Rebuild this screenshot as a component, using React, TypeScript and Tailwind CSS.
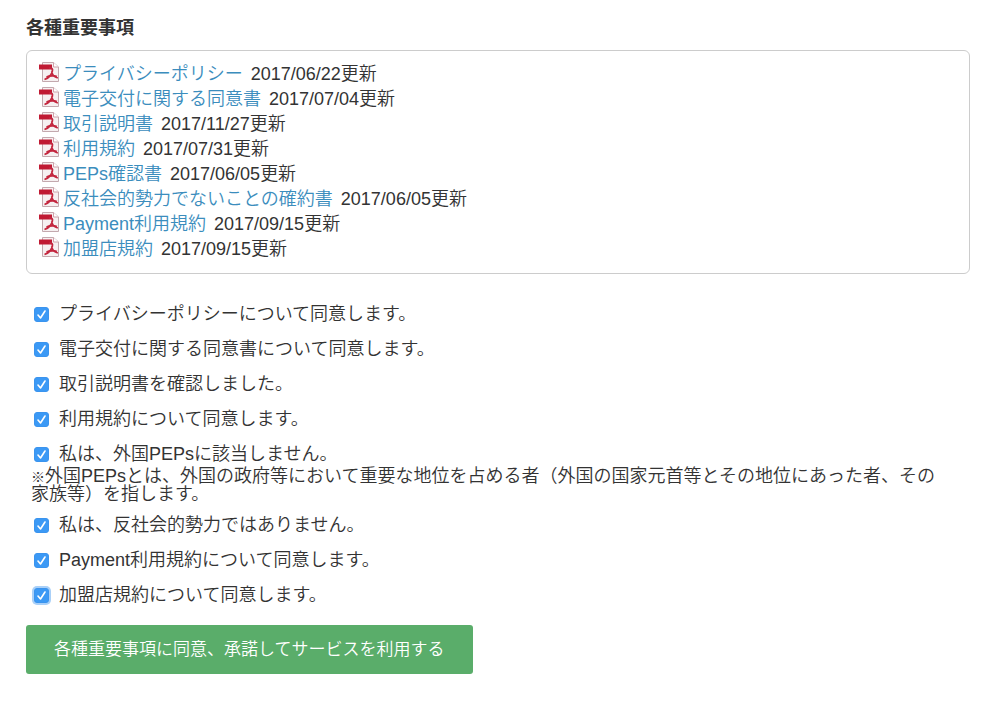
import { useId } from "react";

const documents = [
  { title: "プライバシーポリシー", updated: "2017/06/22" },
  { title: "電子交付に関する同意書", updated: "2017/07/04" },
  { title: "取引説明書", updated: "2017/11/27" },
  { title: "利用規約", updated: "2017/07/31" },
  { title: "PEPs確認書", updated: "2017/06/05" },
  { title: "反社会的勢力でないことの確約書", updated: "2017/06/05" },
  { title: "Payment利用規約", updated: "2017/09/15" },
  { title: "加盟店規約", updated: "2017/09/15" },
];

function PdfIcon() {
  return (
    <svg viewBox="0 0 20 20" className="size-5 shrink-0" aria-hidden="true">
      <path d="M3.500 .5h11l5 4.500v14.500h-16z" fill="#f6f0f1" stroke="#c3a9ae" />
      <path d="M14.500 .5v4.500h5" fill="#fff" stroke="#cfa3ab" />
      <path d="M0 2.500h13v5H0z" fill="#c01a33" />
      <path
        d="M10 6c3-.5 4 .8 3.300 3.200C12.500 12.500 9.500 16 5.500 17.500M12.800 9.500c0 3 2.200 5.300 6 6.500M7.500 15c3-1.300 6.500-1.800 10.500-.5"
        fill="none"
        stroke="#c3253d"
        strokeWidth="1.8"
      />
    </svg>
  );
}

function Agreement({ text, focused }: { text: string; focused?: boolean }) {
  const id = useId();
  return (
    <div className="flex h-[35px] items-center gap-[10px] pl-2">
      <span className="mt-[2px] grid shrink-0">
        <input
          id={id}
          type="checkbox"
          defaultChecked
          autoFocus={focused}
          className="peer col-start-1 row-start-1 size-[15px] appearance-none rounded-[3px] border border-[#b5b5b5] bg-white outline-none checked:border-[#3b94ee] checked:bg-[#3b99f5] focus:ring-2 focus:ring-[#a9d0f8]"
        />
        <svg
          viewBox="0 0 15 15"
          className="pointer-events-none invisible col-start-1 row-start-1 size-[15px] peer-checked:visible"
          aria-hidden="true"
        >
          <path
            d="M4 8l2.500 3L11 4"
            fill="none"
            stroke="#fff"
            strokeWidth="1.6"
            strokeLinecap="round"
            strokeLinejoin="round"
          />
        </svg>
      </span>
      <label htmlFor={id}>{text}</label>
    </div>
  );
}

export default function App() {
  return (
    <main className="bg-white pt-4 pr-[30px] pb-12 pl-[26px] font-['Liberation_Sans','Noto_Sans_CJK_JP',sans-serif] text-lg leading-6 font-[350] text-[#333]">
      <h1 className="font-bold">各種重要事項</h1>

      <ul className="mt-[10px] rounded-md border border-[#ccc] px-3 py-[11px]">
        {documents.map((doc) => (
          <li key={doc.title} className="flex h-[25px] items-start gap-1">
            <PdfIcon />
            <a href="#" className="text-[#3b8dbd]">
              {doc.title}
            </a>
            <span className="ml-1">{doc.updated}更新</span>
          </li>
        ))}
      </ul>

      <form onSubmit={(e) => e.preventDefault()}>
        <div className="mt-[22px]">
          <Agreement text="プライバシーポリシーについて同意します。" />
          <Agreement text="電子交付に関する同意書について同意します。" />
          <Agreement text="取引説明書を確認しました。" />
          <Agreement text="利用規約について同意します。" />
          <Agreement text="私は、外国PEPsに該当しません。" />
          <p className="-mt-1 px-[5px] leading-[18px]">
            <span className="text-sm leading-none">※</span>
            外国PEPsとは、外国の政府等において重要な地位を占める者（外国の国家元首等とその地位にあった者、その
            <br />
            家族等）を指します。
          </p>
          <div className="mt-1">
            <Agreement text="私は、反社会的勢力ではありません。" />
            <Agreement text="Payment利用規約について同意します。" />
            <Agreement text="加盟店規約について同意します。" focused />
          </div>
        </div>
        <button
          type="submit"
          className="mt-[13px] h-[49px] rounded-[3px] bg-[#5aad6a] px-7 text-[17px] text-white"
        >
          各種重要事項に同意、承諾してサービスを利用する
        </button>
      </form>
    </main>
  );
}
